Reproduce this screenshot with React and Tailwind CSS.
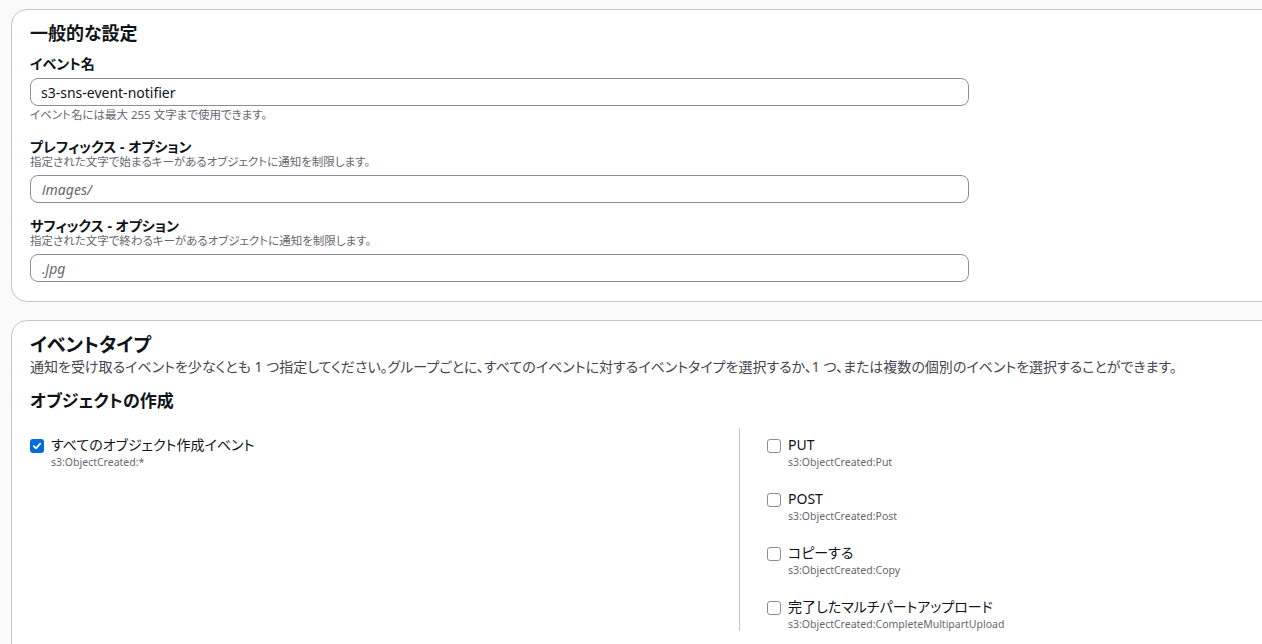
import React from "react";

const font = {
  fontFamily: '"Noto Sans", "Noto Sans CJK JP", sans-serif',
};

function Checkbox({ checked }) {
  if (checked) {
    return (
      <span className="flex h-[14px] w-[14px] shrink-0 items-center justify-center rounded-[3px] bg-[#006ce0]">
        <svg width="10" height="10" viewBox="0 0 10 10" fill="none">
          <path d="M1.8 5.2 L4 7.4 L8.2 2.6" stroke="white" strokeWidth="1.8" strokeLinecap="round" strokeLinejoin="round" />
        </svg>
      </span>
    );
  }
  return <span className="block h-[14px] w-[14px] shrink-0 rounded-[3px] border border-[#8c8c94] bg-white" />;
}

function CheckRow({ checked, label, code }) {
  return (
    <div className="flex items-start">
      <div className="mt-[4px] shrink-0">
        <Checkbox checked={checked} />
      </div>
      <div className="ml-[7px]">
        <div className="text-[14px] leading-[20px] text-[#0f141a]">{label}</div>
        <div className="text-[10.5px] leading-[14px] text-[#656871]">{code}</div>
      </div>
    </div>
  );
}

function Input({ value, placeholder }) {
  return (
    <div className="flex h-[28px] w-[939px] items-center rounded-[8px] border border-[#8c8c94] bg-white">
      {value ? (
        <span className="pl-[10px] text-[14px] text-[#0f141a]">{value}</span>
      ) : (
        <span className="pl-[11px] text-[14px] italic text-[#656871]">{placeholder}</span>
      )}
    </div>
  );
}

export default function App() {
  return (
    <div
      className="h-[644px] w-[1262px] overflow-hidden bg-[#fafafa] pl-[11px] pt-[9px] [font-feature-settings:'palt']"
      style={font}
    >
      <div className="w-[1400px] rounded-[16px] border border-[#c6c6cd] bg-white pl-[18px] pt-[12px] pb-[19px]">
        <h2 className="text-[18px] font-bold leading-[22px] text-[#0f141a]">一般的な設定</h2>
        <div className="mt-[9px] text-[14px] font-bold leading-[22px] text-[#0f141a]">イベント名</div>
        <div className="mt-[3px]">
          <Input value="s3-sns-event-notifier" />
        </div>
        <div className="mt-[1px] text-[11.5px] leading-[16px] text-[#656871]">
          イベント名には最大 255 文字まで使用できます。
        </div>
        <div className="mt-[17px] text-[14px] font-bold leading-[14px] text-[#0f141a]">プレフィックス - オプション</div>
        <div className="text-[11.5px] leading-[16px] text-[#656871]">
          指定された文字で始まるキーがあるオブジェクトに通知を制限します。
        </div>
        <div className="mt-[5px]">
          <Input placeholder="images/" />
        </div>
        <div className="mt-[16px] text-[14px] font-bold leading-[14px] text-[#0f141a]">サフィックス - オプション</div>
        <div className="text-[11.5px] leading-[16px] text-[#656871]">
          指定された文字で終わるキーがあるオブジェクトに通知を制限します。
        </div>
        <div className="mt-[5px]">
          <Input placeholder=".jpg" />
        </div>
      </div>

      <div className="mt-[18px] w-[1400px] rounded-[16px] border border-[#c6c6cd] bg-white pl-[18px] pt-[12px] pb-[40px]">
        <h2 className="text-[19px] font-bold leading-[24px] text-[#0f141a]">イベントタイプ</h2>
        <p className="text-[14px] leading-[20px] text-[#424650]">
          通知を受け取るイベントを少なくとも 1 つ指定してください。グループごとに、すべてのイベントに対するイベントタイプを選択するか、1 つ、または複数の個別のイベントを選択することができます。
        </p>
        <h3 className="mt-[14px] text-[17px] font-bold leading-[20px] text-[#0f141a]">オブジェクトの作成</h3>
        <div className="mt-[17px] flex">
          <div className="w-[709px] pt-[7px]">
            <CheckRow checked label="すべてのオブジェクト作成イベント" code="s3:ObjectCreated:*" />
          </div>
          <div className="flex flex-col gap-[20px] border-l border-[#c6c6cd] pl-[27px] pt-[7px]">
            <CheckRow label="PUT" code="s3:ObjectCreated:Put" />
            <CheckRow label="POST" code="s3:ObjectCreated:Post" />
            <CheckRow label="コピーする" code="s3:ObjectCreated:Copy" />
            <CheckRow label="完了したマルチパートアップロード" code="s3:ObjectCreated:CompleteMultipartUpload" />
          </div>
        </div>
      </div>
    </div>
  );
}
